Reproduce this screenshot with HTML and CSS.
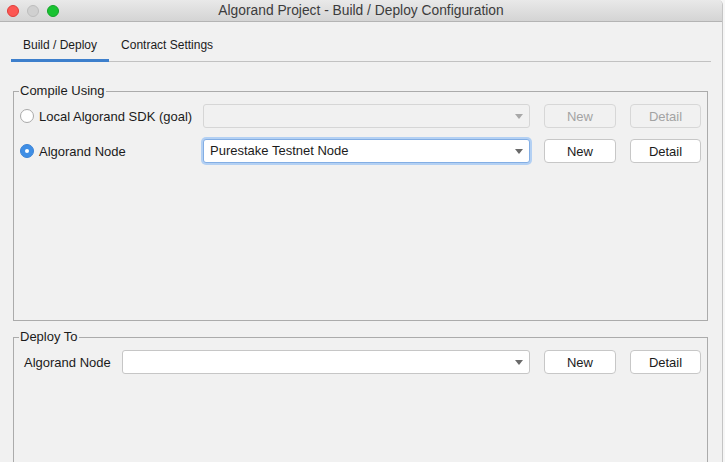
FILE: index.html
```html
<!DOCTYPE html>
<html>
<head>
<meta charset="utf-8">
<link rel="stylesheet" href="styles.css">
</head>
<body>
<div class="window">
  <div class="titlebar">
    <div class="lights">
      <span class="light red"></span>
      <span class="light gray"></span>
      <span class="light green"></span>
    </div>
    <div class="title">Algorand Project - Build / Deploy Configuration</div>
  </div>
  <div class="tabbar">
    <div class="tab active">Build / Deploy</div>
    <div class="tab">Contract Settings</div>
  </div>
  <div class="content">
    <fieldset class="group compile">
      <legend>Compile Using</legend>
      <div class="rows">
        <div class="row">
          <label class="radio-label"><span class="radio"></span>Local Algorand SDK (goal)</label>
          <div class="combo disabled"><span class="combo-text"></span><span class="arrow"></span></div>
          <div class="btn new disabled">New</div>
          <div class="btn detail disabled">Detail</div>
        </div>
        <div class="row">
          <label class="radio-label"><span class="radio checked"></span>Algorand Node</label>
          <div class="combo focused"><span class="combo-text">Purestake Testnet Node</span><span class="arrow"></span></div>
          <div class="btn new">New</div>
          <div class="btn detail">Detail</div>
        </div>
      </div>
    </fieldset>
    <fieldset class="group deploy">
      <legend>Deploy To</legend>
      <div class="rows">
        <div class="row">
          <label class="plain-label">Algorand Node</label>
          <div class="combo wide"><span class="combo-text"></span><span class="arrow"></span></div>
          <div class="btn new">New</div>
          <div class="btn detail">Detail</div>
        </div>
      </div>
    </fieldset>
  </div>
</div>
</body>
</html>
```
FILE: styles.css
```css
html, body {
  margin: 0;
  padding: 0;
  width: 725px;
  height: 462px;
  overflow: hidden;
  background: #f6f6f6;
  font-family: "Liberation Sans", Arial, sans-serif;
  font-size: 13px;
  color: #1b1b1b;
}

.window {
  width: 723px;
  height: 462px;
  background: #f1f1f1;
  border-right: 1px solid #c4c4c4;
  border-top-right-radius: 5px;
  overflow: hidden;
  box-sizing: border-box;
}

.titlebar {
  height: 22px;
  box-sizing: border-box;
  border-bottom: 1px solid #b4b4b4;
  background: linear-gradient(#e9e9e9, #d4d4d4);
  display: flex;
  align-items: center;
  position: relative;
}

.lights {
  display: flex;
  gap: 8px;
  padding-left: 7px;
}

.light {
  width: 12px;
  height: 12px;
  border-radius: 50%;
  box-sizing: border-box;
}
.light.red { background: #fc5753; border: 1px solid #df3d39; }
.light.gray { background: #d0d0d0; border: 1px solid #bdbdbd; }
.light.green { background: #19c332; border: 1px solid #14a329; }

.title {
  position: absolute;
  left: 0;
  right: 0;
  top: 0;
  line-height: 21px;
  text-align: center;
  color: #3c3c3c;
  font-size: 13.8px;
}

.tabbar {
  margin: 0 11px;
  height: 40px;
  box-sizing: border-box;
  border-bottom: 1px solid #c2c2c2;
  display: flex;
  align-items: flex-end;
}

.tab {
  padding: 15px 12px 6px;
  line-height: 16px;
  font-size: 12px;
  border-bottom: 3px solid transparent;
  margin-bottom: -1px;
}
.tab.active {
  border-bottom-color: #3d7fcc;
}

.content {
  padding: 21px 14px 0 13px;
}

.group {
  margin: 0;
  padding: 5px 6px 0 6px;
  border: 1px solid #ababab;
  min-width: 0;
}
.group legend {
  padding: 0 1px;
  margin-left: -1px;
  line-height: 16px;
}

.compile .rows {
  height: 216px;
}
.deploy {
  margin-top: 8px;
}
.deploy .rows {
  height: 200px;
}

.rows {
  display: flex;
  flex-direction: column;
  gap: 11px;
}

.row {
  display: flex;
  align-items: center;
  height: 24px;
}

.radio-label {
  width: 183px;
  flex: none;
  display: flex;
  align-items: center;
}
.plain-label {
  width: 98px;
  flex: none;
  margin-left: 4px;
}

.radio {
  width: 14px;
  height: 14px;
  border-radius: 50%;
  box-sizing: border-box;
  border: 1px solid #a9a9a9;
  background: #fff;
  margin-right: 5px;
  position: relative;
}
.radio.checked {
  background: #3f8ee5;
  border-color: #3a83d6;
}
.radio.checked::after {
  content: "";
  position: absolute;
  left: 4px;
  top: 4px;
  width: 4px;
  height: 4px;
  border-radius: 50%;
  background: #fff;
}

.combo {
  width: 327px;
  flex: none;
  height: 24px;
  box-sizing: border-box;
  border: 1px solid #c6c6c6;
  border-radius: 3px;
  background: #fff;
  display: flex;
  align-items: center;
  padding: 0 6px 0 6px;
}
.combo.wide { width: 408px; }
.combo.disabled {
  background: #f1f1f1;
  border-color: #d6d6d6;
}
.combo.focused {
  border-color: #83aee4;
  box-shadow: 0 0 0 2px #b3d0f3;
}
.combo-text {
  flex: 1;
  line-height: 16px;
}
.arrow {
  width: 0;
  height: 0;
  border-left: 4px solid transparent;
  border-right: 4px solid transparent;
  border-top: 5px solid #6a6a6a;
}
.combo.disabled .arrow {
  border-top-color: #a8a8a8;
}

.btn {
  height: 24px;
  flex: none;
  box-sizing: border-box;
  border: 1px solid #c7c7c7;
  border-radius: 4px;
  background: #fff;
  display: flex;
  align-items: center;
  justify-content: center;
  margin-left: 14px;
}
.btn.new { width: 72px; }
.btn.detail { width: 71px; }
.btn.disabled {
  background: #f1f1f1;
  border-color: #d7d7d7;
  color: #a3a3a3;
}
```
